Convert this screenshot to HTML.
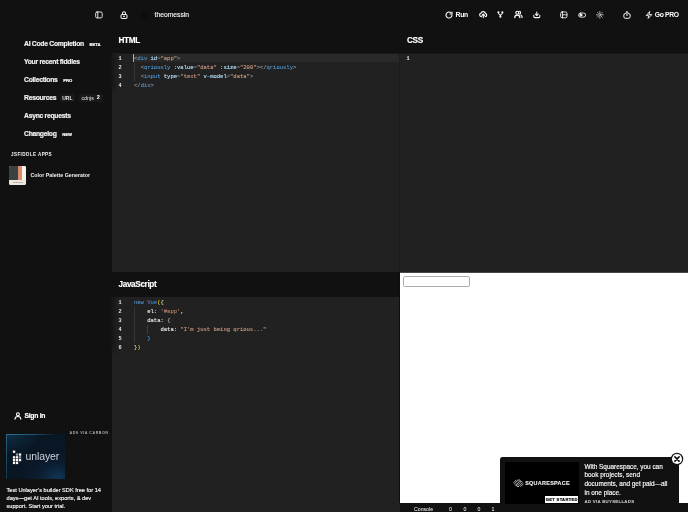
<!DOCTYPE html>
<html><head><meta charset="utf-8">
<style>
*{box-sizing:border-box;margin:0;padding:0}
html,body{width:688px;height:512px;overflow:hidden;background:#111;font-family:"Liberation Sans",sans-serif;color:#fff}
.abs{position:absolute}
#side{left:0;top:0;width:112px;height:512px;background:#111}
.nav{-webkit-text-stroke:0.180px currentColor;position:absolute;left:24px;font-size:6.8px;font-weight:bold;color:#f2f2f2;white-space:nowrap;letter-spacing:-0.28px}
.badge{-webkit-text-stroke:0.2px #fff;font-size:4.2px;font-weight:bold;letter-spacing:0.1px;margin-left:5.6px;position:relative;top:0px;letter-spacing:0}
.pill{font-size:5.2px;font-weight:normal;color:#ddd;margin-left:5px;background:#1c1c1c;padding:1.5px 2.5px;border-radius:2px}
.ptitle{-webkit-text-stroke:0.150px #fff;position:absolute;font-size:8.200px;font-weight:bold;color:#fff;letter-spacing:-0.360px}
.ed{position:absolute;background:#212121}
.ed.top1{background:linear-gradient(180deg,#181818 0,#181818 1px,#212121 1px)}
.gut{position:absolute;left:-2px;top:0;height:40px;width:10px;background:linear-gradient(90deg,#111 0%,#171717 25%,#1d1d1d 60%,#212121 100%);-webkit-mask-image:linear-gradient(180deg,#000 0,#000 80%,transparent 100%);mask-image:linear-gradient(180deg,#000 0,#000 80%,transparent 100%)}
.code{position:absolute;font-family:"Liberation Mono",monospace;font-size:5.530px;line-height:9px;white-space:pre;color:#d4d4d4;-webkit-text-stroke:0.100px currentColor}
.ln{position:absolute;font-family:"Liberation Mono",monospace;font-size:5.2px;line-height:9px;color:#e8e8e8;font-weight:bold;white-space:pre}
.t{color:#5296cf}.g{color:#9c9c9c}.a{color:#b4e0fb}.s{color:#cb9a83}.s2{color:#b5846c}.y{color:#ffd700}.y2{color:#e4dc9a}.v{color:#3f86c8}.p{color:#da70d6}.w{color:#ededed}.e{color:#7c7c7c}.b1{color:#9db4c8}.b2{color:#3f9fe8}
svg{position:absolute;overflow:visible}
#root{position:absolute;left:0;top:0;width:688px;height:512px;will-change:transform;overflow:hidden}
</style></head><body><div id="root">
<div id="side" class="abs">
  <div class="nav" style="top:40px">AI Code Completion<span class="badge">BETA</span></div>
  <div class="nav" style="top:58px">Your recent fiddles</div>
  <div class="nav" style="top:76px">Collections<span class="badge">PRO</span></div>
  <div class="nav" style="top:94px">Resources</div>
  <div class="abs" style="left:59.500px;top:93.500px;width:15px;height:8.500px;background:#191919;border-radius:2px"></div>
  <div class="abs" style="left:62.200px;top:95.300px;font-size:5px;color:#e4e4e4;font-weight:bold">URL</div>
  <div class="abs" style="left:78.500px;top:93.500px;width:24px;height:8.500px;background:#191919;border-radius:2px"></div>
  <div class="abs" style="left:81.400px;top:95.300px;font-size:5.400px;color:#e4e4e4">cdnjs</div>
  <div class="abs" style="left:96.700px;top:94.300px;font-size:5.600px;color:#fff;font-weight:bold">2</div>
  <div class="nav" style="top:112px">Async requests</div>
  <div class="nav" style="top:130px">Changelog<span class="badge">NEW</span></div>
  <div class="abs" style="left:11px;top:152px;font-size:4.6px;font-weight:bold;letter-spacing:0.4px;color:#f4f4f4">JSFIDDLE APPS</div>
  <div class="abs" style="left:9px;top:165.500px;width:17.200px;height:19px;background:#ece8e0;border-radius:1.500px;overflow:hidden">
    <div class="abs" style="left:0;top:0;width:8.800px;height:14px;background:#3c4241"></div>
    <div class="abs" style="left:8.800px;top:0;width:4.300px;height:14px;background:#dc8c6c"></div>
    <div class="abs" style="left:13.100px;top:0;width:4.100px;height:14px;background:#f6f2ec"></div>
    <div class="abs" style="left:3.500px;top:16px;width:10px;height:1px;background:#b9b4ac"></div>
  </div>
  <div class="abs" style="left:30.5px;top:171.5px;font-size:5.3px;font-weight:bold;color:#f2f2f2;white-space:nowrap">Color Palette Generator</div>

  <svg style="left:14.400px;top:411.800px" width="7.800" height="7.800" viewBox="0 0 24 24" fill="none" stroke="#fff" stroke-width="3.200" stroke-linecap="round"><circle cx="12" cy="7" r="4.5"/><path d="M3 22c0-5 4-8 9-8s9 3 9 8"/></svg>
  <div class="nav" style="left:24.500px;top:412px;color:#fff">Sign in</div>

  <div class="abs" style="right:3.5px;top:430.5px;font-size:3.7px;font-weight:bold;letter-spacing:0.5px;color:#aaa;white-space:nowrap">ADS VIA CARBON</div>
  <div class="abs" style="left:6px;top:434px;width:58.500px;height:45.300px;padding:0.800px 0 0 0.800px;background:radial-gradient(ellipse 65% 70% at 88% 100%,#113656 0%,rgba(13,36,58,0.5) 50%,rgba(9,22,36,0) 100%),radial-gradient(ellipse 55% 45% at 5% 0%,#0f2e44 0%,rgba(9,22,36,0) 100%),#091624">
    <div class="abs" style="left:0;top:0;width:58.500px;height:0.900px;background:linear-gradient(90deg,#2f7090 0%,#1f5674 45%,rgba(9,22,36,0) 90%)"></div>
    <div class="abs" style="left:0;top:0;width:0.900px;height:45.300px;background:linear-gradient(180deg,#2a6482 0%,#123850 100%)"></div>
    <div class="abs" style="left:19.500px;top:16px;font-size:10.500px;color:#ccd2d8;letter-spacing:-0.100px">unlayer</div>
    <svg style="left:0;top:0" width="58" height="45" viewBox="0 0 58 45"><rect x="6.9" y="16.6" width="2.3" height="2.3" fill="#fff"/><rect x="9.9" y="19.4" width="2.3" height="2.3" fill="#8f9aa6"/><rect x="12.9" y="19.4" width="2.3" height="2.3" fill="#fff"/><rect x="6.9" y="22.2" width="2.3" height="2.3" fill="#fff"/><rect x="9.9" y="22.2" width="2.3" height="2.3" fill="#fff"/><rect x="12.9" y="22.2" width="2.3" height="2.3" fill="#8f9aa6"/><rect x="6.9" y="25.0" width="2.3" height="2.3" fill="#fff"/><rect x="9.9" y="25.0" width="2.3" height="2.3" fill="#fff"/><rect x="12.9" y="25.0" width="2.3" height="2.3" fill="#fff"/><rect x="6.9" y="27.8" width="2.3" height="2.3" fill="#fff"/><rect x="9.9" y="27.8" width="2.3" height="2.3" fill="#fff"/></svg>
  </div>
  <div class="abs" style="left:6.500px;top:486px;font-size:5.650px;line-height:8px;color:#f6f6f6;white-space:nowrap;-webkit-text-stroke:0.150px #f6f6f6">Test Unlayer’s builder SDK free for 14<br>days—get AI tools, exports, &amp; dev<br>support. Start your trial.</div>
</div>

<!-- top bar -->
<div class="abs" style="left:154.500px;top:10.500px;font-size:6.750px;color:#f8f8f8;-webkit-text-stroke:0.120px #f8f8f8">theomessin</div>
<div class="abs" style="left:455.600px;top:10.700px;letter-spacing:-0.300px;font-size:6.800px;font-weight:bold;color:#fff">Run</div>
<div class="abs" style="left:654.700px;top:10.700px;letter-spacing:-0.330px;font-size:6.800px;font-weight:bold;color:#fff;white-space:nowrap">Go PRO</div>


<!-- icons -->
<svg style="left:94.700px;top:10.700px" width="7.900" height="7.900" viewBox="0 0 24 24" fill="none" stroke="#f0f0f0" stroke-width="2.800" stroke-linecap="round" stroke-linejoin="round"><rect x="2" y="3" width="20" height="18" rx="4"/><path d="M8.5 3v18"/></svg>
<svg style="left:120.200px;top:10.700px" width="8" height="8" viewBox="0 0 24 24" fill="none" stroke="#f0f0f0" stroke-width="3.2" stroke-linecap="round" stroke-linejoin="round"><rect x="3" y="10.500" width="18" height="12" rx="3.500"/><path d="M7.500 10.500V6.500a4.500 4.500 0 0 1 9 0v4"/><circle cx="12" cy="16" r="1.2" fill="#f0f0f0"/></svg>
<div class="abs" style="left:140.500px;top:10.500px;width:8px;height:8px;border-radius:50%;background:#0d0d0d"></div>
<svg style="left:444.8px;top:10.6px" width="8" height="8" viewBox="0 0 24 24" fill="none" stroke="#fff" stroke-width="3.3" stroke-linecap="round" stroke-linejoin="round"><path d="M21 12a9 9 0 1 1-3.2-6.9"/><path d="M21 3v6h-6"/></svg>
<svg style="left:478.500px;top:10.3px" width="8.6" height="8.6" viewBox="0 0 24 24" fill="none" stroke="#fff" stroke-width="3.2" stroke-linecap="round" stroke-linejoin="round"><path d="M7 18.5H6.5a4.8 4.8 0 0 1-.9-9.5 6.5 6.5 0 0 1 12.6 1.2A4.2 4.2 0 0 1 17.5 18.500"/><path d="M12 21v-9"/><path d="M8.5 15l3.500-3.500 3.500 3.500"/></svg>
<svg style="left:497.100px;top:11.300px" width="6.800" height="6.800" viewBox="0 0 24 24" fill="none" stroke="#fff" stroke-width="3.600" stroke-linecap="round" stroke-linejoin="round"><circle cx="5" cy="4.500" r="2"/><circle cx="19" cy="4.500" r="2"/><circle cx="12" cy="20" r="2"/><path d="M5 7c0 5.500 7 4 7 10"/><path d="M19 7c0 5.500-7 4-7 10"/></svg>
<svg style="left:514.2px;top:10.3px" width="8.8" height="8.8" viewBox="0 0 24 24" fill="none" stroke="#fff" stroke-width="3.2" stroke-linecap="round" stroke-linejoin="round"><circle cx="9" cy="7.500" r="4"/><path d="M2 21c0-4.500 3-7 7-7s7 2.500 7 7"/><path d="M15.500 3.800a4 4 0 0 1 0 7.400"/><path d="M19 14.500c2 .9 3.200 3 3.200 6"/></svg>
<svg style="left:532.700px;top:10.800px" width="7.600" height="7.600" viewBox="0 0 24 24" fill="none" stroke="#fff" stroke-width="3.300" stroke-linecap="round" stroke-linejoin="round"><path d="M12 3.500v10"/><path d="M7.500 9.500l4.500 4.500 4.500-4.500"/><path d="M2.500 13.500v3.500a4 4 0 0 0 4 4h11a4 4 0 0 0 4-4v-3.500"/></svg>
<svg style="left:560px;top:10.700px" width="7.600" height="7.600" viewBox="0 0 24 24" fill="none" stroke="#fff" stroke-width="2.700" stroke-linecap="round" stroke-linejoin="round"><rect x="2" y="3" width="20" height="18.500" rx="4.500"/><path d="M7.900 3v18.500"/><path d="M7.900 12h14"/></svg>
<svg style="left:577.700px;top:10.600px" width="8.200" height="8.200" viewBox="0 0 24 24" fill="none" stroke="#fff" stroke-width="2.500" stroke-linecap="round" stroke-linejoin="round"><rect x="1.800" y="6" width="20.500" height="12" rx="6"/><circle cx="8.500" cy="12" r="3" fill="#fff"/></svg>
<svg style="left:595.700px;top:10.800px" width="7.700" height="7.700" viewBox="0 0 24 24" fill="none" stroke="#e8e8e8" stroke-width="2.300" stroke-linecap="round" stroke-linejoin="round"><circle cx="12" cy="12" r="3.400"/><path d="M12 1.500v4M12 18.500v4M1.500 12h4M18.500 12h4M4.600 4.600l2.800 2.800M16.600 16.600l2.800 2.800M4.600 19.400l2.800-2.800M16.600 7.400l2.800-2.800"/></svg>
<svg style="left:622.900px;top:10.600px" width="8" height="8" viewBox="0 0 24 24" fill="none" stroke="#fff" stroke-width="3" stroke-linecap="round" stroke-linejoin="round"><path d="M8 7.500H7.500a5 5 0 0 0-5 5v4a5.500 5.500 0 0 0 5.500 5.500h8a5.500 5.500 0 0 0 5.500-5.500v-4a5 5 0 0 0-5-5H16"/><path d="M12 2v12"/><path d="M9.800 4l2.200-2.200L14.200 4"/></svg>
<svg style="left:644.600px;top:10.500px" width="8" height="8.200" viewBox="0 0 24 24" fill="none" stroke="#fff" stroke-width="2.700" stroke-linecap="round" stroke-linejoin="round"><path d="M13.500 2L3.500 13.500h7.500l-1.500 8.500L20.500 10.500h-7.500z"/></svg>

<!-- panels -->
<div class="ptitle" style="left:118.5px;top:35.5px">HTML</div>
<div class="ptitle" style="left:407px;top:35.5px">CSS</div>
<div class="ptitle" style="left:118.5px;top:279.5px">JavaScript</div>

<div class="ed top1" style="left:112px;top:53px;width:288px;height:219px">
  <div class="gut"></div>
  <div class="abs" style="left:21.500px;top:1px;right:0;height:8px;background:#292929"></div>
  <div class="abs" style="left:21.200px;top:0.800px;width:1.300px;height:8.600px;background:#b4b4b4"></div>
  <div class="abs" style="left:21.700px;top:9.500px;width:0.600px;height:18px;background:#363636"></div>
  <div class="ln" style="left:6.5px;top:1.5px">1
2
3
4</div>
  <div class="code" style="left:22px;top:0.5px"><span class="g">&lt;</span><span class="t">div</span> <span class="a">id</span><span class="e">=</span><span class="s">"app"</span><span class="g">&gt;</span>
  <span class="g">&lt;</span><span class="t">qriously</span> <span class="a">:value</span><span class="e">=</span><span class="s">"data"</span> <span class="a">:size</span><span class="e">=</span><span class="s">"200"</span><span class="g">&gt;&lt;/</span><span class="t">qriously</span><span class="g">&gt;</span>
  <span class="g">&lt;</span><span class="t">input</span> <span class="a">type</span><span class="e">=</span><span class="s">"text"</span> <span class="a">v-model</span><span class="e">=</span><span class="s">"data"</span><span class="g">&gt;</span>
<span class="g">&lt;/</span><span class="t">div</span><span class="g">&gt;</span></div>
</div>

<div class="ed top1" style="left:400px;top:53px;width:288px;height:219px">
  <div class="abs" style="left:-1px;top:0;width:1px;height:219px;background:#1c1c1c"></div>
  <div class="ln" style="left:6.5px;top:1.5px">1</div>
</div>

<div class="ed" style="left:112px;top:297px;width:288px;height:215px">
  <div class="gut" style="height:60px"></div>
  <div class="ln" style="left:6.5px;top:1.5px">1
2
3
4
5
6</div>
  <div class="abs" style="left:21.700px;top:9.500px;width:0.600px;height:36px;background:#363636"></div>
  <div class="abs" style="left:34.900px;top:27.500px;width:0.600px;height:9px;background:#3c3c3c"></div>
  <div class="code" style="left:22px;top:0.500px"><span class="t">new</span> <span class="v">Vue</span><span class="y">(</span><span class="y2">{</span>
    <span class="w">el:</span> <span class="s2">'#app'</span><span class="w">,</span>
    <span class="w">data</span><span class="w">:</span> <span class="b1">{</span>
        <span class="w">data</span><span class="w">:</span> <span class="s">"I'm just being qrious..."</span>
    <span class="b2">}</span>
<span class="y2">}</span><span class="y">)</span></div>
</div>

<!-- result -->
<div class="abs" style="left:399px;top:272px;width:1px;height:231px;background:#0e0e0e"></div>
<div class="abs" style="left:400px;top:272px;width:288px;height:231px;background:#fff;box-shadow:inset 0 0.700px 0 #0c0c0c">
  <div class="abs" style="left:3.300px;top:4px;width:66.500px;height:10.600px;border:0.750px solid #adadad;border-radius:1.800px;background:#fff"></div>
</div>
<div class="abs" style="left:400px;top:503px;width:288px;height:9px;background:#111">
  <div class="abs" style="left:14px;top:2.5px;font-size:5.2px;color:#fff;white-space:nowrap">Console</div>
  <div class="abs" style="left:49px;top:2.5px;font-size:5.2px;color:#fff">0</div>
  <div class="abs" style="left:63.5px;top:2.5px;font-size:5.2px;color:#fff">0</div>
  <div class="abs" style="left:77.5px;top:2.5px;font-size:5.2px;color:#fff">0</div>
  <div class="abs" style="left:91.5px;top:2.5px;font-size:5.2px;color:#fff">1</div>
</div>

<!-- ad -->
<div class="abs" style="left:500px;top:457px;width:179px;height:55px;background:#111;border-radius:2.500px 2.500px 0 0">
  <div class="abs" style="left:4.500px;top:4.500px;width:74px;height:42px;background:#000"></div>
  <svg style="left:13px;top:21.500px" width="11" height="8.500" viewBox="0 0 22 17" fill="none" stroke="#d8d8d8" stroke-width="1.700" stroke-linecap="round"><path d="M3 9.500l7-7a3 3 0 0 1 4.200 0"/><path d="M5.500 12l7-7a3 3 0 0 1 4.200 0"/><path d="M19 7.500l-7 7a3 3 0 0 1-4.200 0"/><path d="M16.500 5l-7 7a3 3 0 0 1-4.200 0"/><path d="M1.500 7l5-5"/><path d="M20.500 10l-5 5"/></svg>
  <div class="abs" style="left:25.200px;top:22.500px;font-size:5.400px;letter-spacing:0.320px;color:#f2f2f2;font-weight:bold;-webkit-text-stroke:0.100px #fff">SQUARESPACE</div>
  <div class="abs" style="left:45.300px;top:38.500px;width:33px;height:7.500px;background:#fff;color:#000;font-size:4.100px;font-weight:bold;letter-spacing:0.300px;line-height:7.500px;text-align:center;-webkit-text-stroke:0.150px #000">GET STARTED</div>
  <div class="abs adl" style="left:84.500px;top:5.5px;font-size:6.450px;line-height:8px;color:#fff;white-space:nowrap;letter-spacing:-0.020px;-webkit-text-stroke:0.130px #fff">With Squarespace, you can</div>
  <div class="abs adl" style="left:84.500px;top:14.0px;font-size:6.450px;line-height:8px;color:#fff;white-space:nowrap;letter-spacing:-0.020px;-webkit-text-stroke:0.130px #fff">book projects, send</div>
  <div class="abs adl" style="left:84.500px;top:23.0px;font-size:6.450px;line-height:8px;color:#fff;white-space:nowrap;letter-spacing:-0.020px;-webkit-text-stroke:0.130px #fff">documents, and get paid—all</div>
  <div class="abs adl" style="left:84.500px;top:31.5px;font-size:6.450px;line-height:8px;color:#fff;white-space:nowrap;letter-spacing:-0.020px;-webkit-text-stroke:0.130px #fff">in one place.</div>
  <div class="abs" style="left:84.500px;top:41.500px;font-size:4.300px;font-weight:bold;letter-spacing:0.300px;color:#c4c4c4;white-space:nowrap;-webkit-text-stroke:0.100px #c4c4c4">AD VIA BUYSELLADS</div>
</div>
<svg style="left:670.300px;top:452px" width="14" height="14" viewBox="0 0 14 14"><circle cx="7" cy="7" r="6.250" fill="#151515"/><circle cx="7" cy="7" r="5.050" fill="#fff"/><path d="M4.900 4.900l4.200 4.200M9.100 4.900l-4.200 4.200" stroke="#000" stroke-width="1.500" stroke-linecap="round"/></svg>
</div></body></html>
